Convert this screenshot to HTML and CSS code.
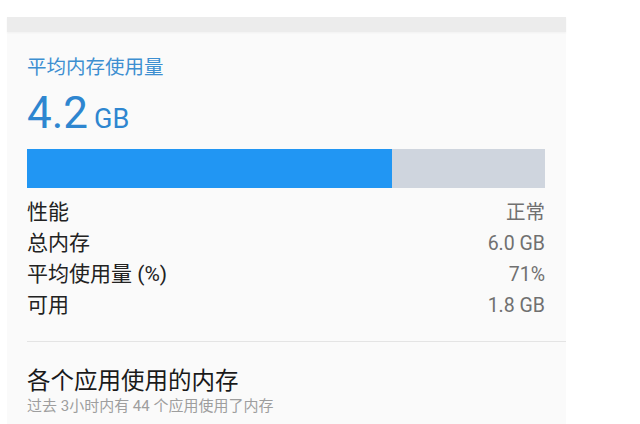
FILE: index.html
```html
<!DOCTYPE html>
<html>
<head>
  <title>内存</title>
  <meta charset="UTF-8">
  <meta name="viewport" content="width=device-width, initial-scale=1.0">
  <link rel="stylesheet" href="styles.css">
</head>
<body>
  <div id="panel">
    <div id="top-strip"></div>

    <div id="content">
      <div id="avg-title">平均内存使用量</div>
      <div id="avg-value"><span class="num">4.2</span><span class="unit">GB</span></div>

      <div id="usage-bar">
        <div id="usage-fill" style="width: 70.5%"></div>
      </div>

      <div class="stat-row"><span class="label">性能</span><span class="value">正常</span></div>
      <div class="stat-row"><span class="label">总内存</span><span class="value">6.0 GB</span></div>
      <div class="stat-row"><span class="label">平均使用量 (%)</span><span class="value">71%</span></div>
      <div class="stat-row"><span class="label">可用</span><span class="value">1.8 GB</span></div>

      <div class="divider"></div>

      <div id="apps-title">各个应用使用的内存</div>
      <div id="apps-sub">过去 3小时内有 44 个应用使用了内存</div>
    </div>
  </div>
</body>
</html>
```

FILE: styles.css
```css
body {
  margin: 0;
  padding: 17px 0 0 7px;
  background-color: #fff;
  font-family: 'Roboto', 'Noto Sans CJK SC', sans-serif;
  overflow: hidden;
}

#panel {
  width: 559px;
  min-height: 420px;
  background-color: #fafafa;
}

#top-strip {
  height: 15px;
  background-color: #ececec;
  box-shadow: 0 1px 2px rgba(0, 0, 0, 0.04);
}

#content {
  padding: 24px 21px 0 20px;
}

#avg-title {
  font-size: 19.5px;
  line-height: 24px;
  color: #3d8fd1;
}

#avg-value {
  margin-top: 9px;
  line-height: 48px;
  height: 48px;
  color: #2e86d0;
}

#avg-value .num {
  font-size: 44px;
}

#avg-value .unit {
  font-size: 27px;
  margin-left: 6px;
}

#usage-bar {
  margin-top: 12px;
  height: 39px;
  background-color: #cfd5de;
  display: flex;
}

#usage-fill {
  height: 100%;
  background-color: #2196f3;
}

.stat-row {
  display: flex;
  justify-content: space-between;
  height: 31px;
  line-height: 31px;
}

#usage-bar + .stat-row {
  margin-top: 9px;
}

.stat-row .label {
  font-size: 21px;
  color: #222;
}

.stat-row .value {
  font-size: 19.5px;
  color: #707070;
}

.divider {
  margin: 20px -21px 0 0;
  height: 1px;
  background-color: #e4e4e4;
}

#apps-title {
  margin-top: 24px;
  font-size: 23.5px;
  line-height: 30px;
  color: #1a1a1a;
}

#apps-sub {
  font-size: 15px;
  line-height: 20px;
  color: #9e9e9e;
}
```
